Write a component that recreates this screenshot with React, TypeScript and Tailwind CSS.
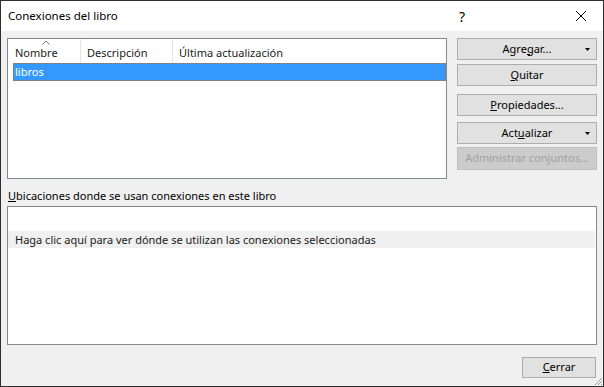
export default function App() {
  const font = { fontFamily: '"Noto Sans", "Open Sans", "DejaVu Sans", sans-serif' };
  return (
    <div
      className="w-[604px] h-[387px] border border-[#2e2e2e] bg-[#f0f0f0] flex flex-col text-[11px] text-black overflow-hidden"
      style={font}
    >
      {/* title bar */}
      <div className="h-[30px] bg-white flex items-center pl-[7px] shrink-0 text-[11.5px]">
        <span className="flex-1">Conexiones del libro</span>
        <span className="w-[20px] text-center text-[14px] mr-[103px]">?</span>
        <svg width="12" height="12" viewBox="0 0 12 12" className="mr-[16px]">
          <path d="M1 1 L11 11 M11 1 L1 11" stroke="#000" strokeWidth="1" />
        </svg>
      </div>

      <div className="flex-1 flex flex-col pt-[7px] pl-[6px] pr-[6px] relative">
        <div className="flex">
          {/* connections list */}
          <div className="w-[440px] h-[141px] bg-white border border-[#828790] flex flex-col">
            <div className="h-[24px] flex text-[#1a1a1a]">
              <div className="w-[73px] pl-[7px] pt-[6px] border-r border-[#e5e5e5] relative">
                Nombre
                <svg width="8" height="5" viewBox="0 0 8 5" className="absolute left-[34px] top-[1px]">
                  <path d="M0.5 4.5 L4 1 L7.5 4.5" stroke="#7a7a7a" fill="none" />
                </svg>
              </div>
              <div className="w-[92px] pl-[6px] pt-[6px] border-r border-[#e5e5e5]">Descripción</div>
              <div className="flex-1 pl-[6px] pt-[6px]">Última actualización</div>
            </div>
            <div className="ml-[5px] h-[18px] bg-[#3399ff] border border-dotted border-[#c8691c] text-white pl-[1px] leading-[15px]">
              libros
            </div>
          </div>

          {/* buttons */}
          <div className="ml-[10px] w-[140px] flex flex-col">
            <Button arrow>
              Agre<u>g</u>ar...
            </Button>
            <Button className="mt-[4px]">
              <u>Q</u>uitar
            </Button>
            <Button className="mt-[8px]">
              <u>P</u>ropiedades...
            </Button>
            <Button className="mt-[6px]" arrow>
              Act<u>u</u>alizar
            </Button>
            <div className="mt-[3px] h-[23px] bg-[#cccccc] border border-[#bfbfbf] text-[#a0a0a0] flex items-center justify-center">
              Administrar conjuntos...
            </div>
          </div>
        </div>

        <div className="mt-[9px] h-[16px] leading-[16px] pl-[1px]">
          <u>U</u>bicaciones donde se usan conexiones en este libro
        </div>
        <div className="mt-[2px] w-[590px] h-[139px] bg-white border border-[#828790] pt-[24px] pr-[1px]">
          <div className="h-[17px] bg-[#f0f0f0] pl-[7px] leading-[17px] text-[#1a1a1a]">
            Haga clic aquí para ver dónde se utilizan las conexiones seleccionadas
          </div>
        </div>

        <div className="flex justify-end mt-[12px] pr-[1px]">
          <div className="w-[74px] h-[21px] bg-[#e1e1e1] border border-[#adadad] flex items-center justify-center">
            <span>
              <u>C</u>errar
            </span>
          </div>
        </div>

        {/* resize grip */}
        <svg width="10" height="10" viewBox="0 0 10 10" className="absolute right-0 bottom-0">
          <path d="M9 2 L2 9 M9 5 L5 9 M9 8 L8 9" stroke="#a0a0a0" strokeWidth="1" />
        </svg>
      </div>
    </div>
  );
}

function Button({
  children,
  className = "",
  arrow = false,
}: {
  children: React.ReactNode;
  className?: string;
  arrow?: boolean;
}) {
  return (
    <div
      className={
        "relative h-[22px] bg-[#e1e1e1] border border-[#adadad] flex items-center justify-center " + className
      }
    >
      <span>{children}</span>
      {arrow && (
        <svg width="5" height="3" viewBox="0 0 5 3" className="absolute right-[6px] top-[9px]">
          <path d="M0 0 H5 L2.5 3 Z" fill="#000" />
        </svg>
      )}
    </div>
  );
}
